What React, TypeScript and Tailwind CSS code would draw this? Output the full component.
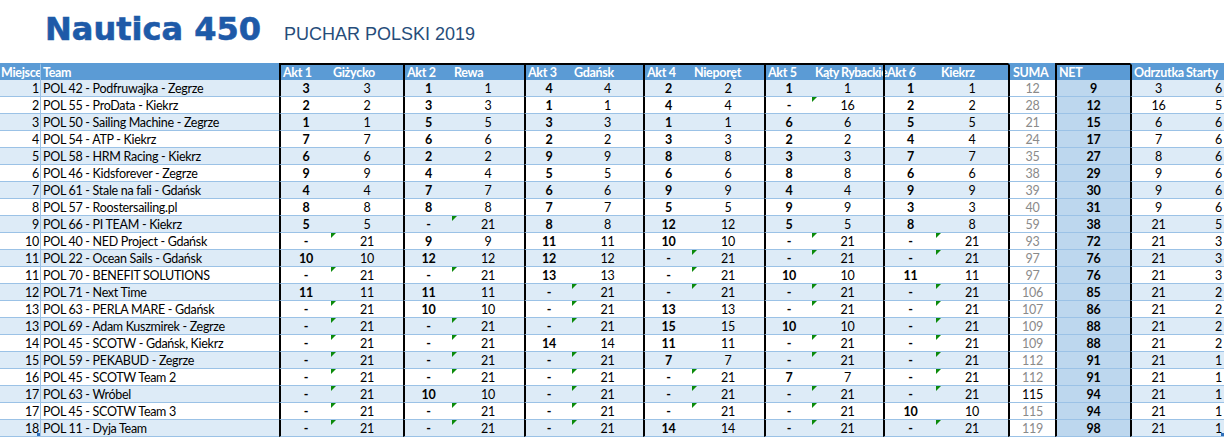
import React from "react";

// column widths follow the sheet: Miejsce, Team, 6 x (Akt, place), SUMA, NET, Odrzutka, Starty
const COLS =
  "grid grid-cols-[41px_238px_52px_72px_49px_72px_48px_71px_49px_72px_48px_71px_53px_72px_47px_75px_55px_39px]";

const HEADERS = [
  "Miejsce",
  "Team",
  "Akt 1",
  "Giżycko",
  "Akt 2",
  "Rewa",
  "Akt 3",
  "Gdańsk",
  "Akt 4",
  "Nieporęt",
  "Akt 5",
  "Kąty Rybackie",
  "Akt 6",
  "Kiekrz",
  "SUMA",
  "NET",
  "Odrzutka",
  "Starty",
];

type Row = [number, string, string, number, number, number, number, boolean?];

const ROWS: Row[] = [
  [1, "POL 42 - Podfruwajka - Zegrze", "3 3 1 1 4 4 2 2 1 1 1 1", 12, 9, 3, 6],
  [2, "POL 55 - ProData - Kiekrz", "2 2 3 3 1 1 4 4 - 16 2 2", 28, 12, 16, 5],
  [3, "POL 50 - Sailing Machine - Zegrze", "1 1 5 5 3 3 1 1 6 6 5 5", 21, 15, 6, 6],
  [4, "POL 54 - ATP - Kiekrz", "7 7 6 6 2 2 3 3 2 2 4 4", 24, 17, 7, 6],
  [5, "POL 58 - HRM Racing - Kiekrz", "6 6 2 2 9 9 8 8 3 3 7 7", 35, 27, 8, 6],
  [6, "POL 46 - Kidsforever - Zegrze", "9 9 4 4 5 5 6 6 8 8 6 6", 38, 29, 9, 6],
  [7, "POL 61 - Stale na fali - Gdańsk", "4 4 7 7 6 6 9 9 4 4 9 9", 39, 30, 9, 6],
  [8, "POL 57 - Roostersailing.pl", "8 8 8 8 7 7 5 5 9 9 3 3", 40, 31, 9, 6],
  [9, "POL 66 - PI TEAM - Kiekrz", "5 5 - 21 8 8 12 12 5 5 8 8", 59, 38, 21, 5],
  [10, "POL 40 - NED Project - Gdańsk", "- 21 9 9 11 11 10 10 - 21 - 21", 93, 72, 21, 3],
  [11, "POL 22 - Ocean Sails - Gdańsk", "10 10 12 12 12 12 - 21 - 21 - 21", 97, 76, 21, 3],
  [11, "POL 70 - BENEFIT SOLUTIONS", "- 21 - 21 13 13 - 21 10 10 11 11", 97, 76, 21, 3],
  [12, "POL 71 - Next Time", "11 11 11 11 - 21 - 21 - 21 - 21", 106, 85, 21, 2],
  [13, "POL 63 - PERLA MARE - Gdańsk", "- 21 10 10 - 21 13 13 - 21 - 21", 107, 86, 21, 2],
  [13, "POL 69 - Adam Kuszmirek - Zegrze", "- 21 - 21 - 21 15 15 10 10 - 21", 109, 88, 21, 2],
  [14, "POL 45 - SCOTW  - Gdańsk, Kiekrz", "- 21 - 21 14 14 11 11 - 21 - 21", 109, 88, 21, 2],
  [15, "POL 59 - PEKABUD - Zegrze", "- 21 - 21 - 21 7 7 - 21 - 21", 112, 91, 21, 1],
  [16, "POL 45 - SCOTW Team 2", "- 21 - 21 - 21 - 21 7 7 - 21", 112, 91, 21, 1],
  [17, "POL 63 - Wróbel", "- 21 10 10 - 21 - 21 - 21 - 21", 115, 94, 21, 1, true],
  [17, "POL 45 - SCOTW Team 3", "- 21 - 21 - 21 - 21 - 21 10 10", 115, 94, 21, 1],
  [18, "POL 11 - Dyja Team", "- 21 - 21 - 21 14 14 - 21 - 21", 119, 98, 21, 1],
];

function headerCell(i: number) {
  if (i === 0) return "overflow-hidden border-t-2 border-t-transparent border-r border-r-[#9dc3e6] pl-[1px]";
  if (i === 1) return "overflow-hidden border-t-2 border-t-transparent pl-[2px]";
  if (i >= 2 && i <= 13 && i % 2 === 0)
    return "overflow-hidden border-t-2 border-t-black border-l-2 border-l-black pl-[2px]";
  // "Kąty Rybackie" runs up to the next border, as in the sheet
  if (i === 11) return "overflow-visible border-t-2 border-t-black pl-[3px] tracking-[-0.55px]";
  if (i === 13) return "overflow-hidden border-t-2 border-t-black pl-[5px]";
  if (i >= 3 && i <= 13) return "overflow-hidden border-t-2 border-t-black pl-[2px]";
  if (i === 14) return "overflow-hidden border-t-2 border-t-transparent border-l-2 border-l-black pl-[3px]";
  if (i === 15) return "overflow-hidden border-t-2 border-t-black border-l-2 border-l-black pl-[2px]";
  if (i === 16) return "overflow-hidden border-t-2 border-t-transparent border-l-2 border-l-black pl-[2px]";
  return "overflow-hidden border-t-2 border-t-transparent pl-[1px]";
}

function Triangle() {
  return (
    <span className="absolute left-0 top-0 h-0 w-0 border-t-[5px] border-r-[5px] border-t-[#0b8a0b] border-r-transparent" />
  );
}

function DataRow({ row, idx, last }: { row: Row; idx: number; last: boolean }) {
  const [place, team, res, suma, net, odr, starty, dark] = row;
  const vals = res.split(" ");
  const stripe = idx % 2 === 0 ? "bg-[#ddebf7]" : "bg-white";
  const cell = "relative flex h-[17px] items-center overflow-hidden whitespace-nowrap border-b border-b-[#9bc2e6] pt-[2px]";

  return (
    <div className={COLS}>
      <div className={`${cell} ${stripe} justify-end border-r border-r-[#9bc2e6] pr-[1px]`}>
        {place}
        {last && <span className="absolute bottom-0 right-0 h-[3px] w-[3px] bg-[#2f6fba]" />}
      </div>
      <div className={`${cell} ${stripe} pl-[2px]`}>{team}</div>
      {vals.map((v, i) =>
        i % 2 === 0 ? (
          <div key={i} className={`${cell} ${stripe} justify-center border-l-2 border-l-black font-bold`}>
            {v}
          </div>
        ) : (
          <div key={i} className={`${cell} ${stripe} justify-center`}>
            {vals[i - 1] === "-" && <Triangle />}
            {v}
          </div>
        )
      )}
      <div
        className={`${cell} justify-center border-l-2 border-l-black bg-white ${
          dark ? "text-black" : "text-[#8a8a8a]"
        }`}
      >
        {suma}
      </div>
      <div className={`${cell} justify-center border-l-2 border-l-black bg-[#bdd7ee] font-bold`}>{net}</div>
      <div className={`${cell} ${stripe} justify-center border-l-2 border-l-black`}>{odr}</div>
      <div className={`${cell} ${stripe} justify-end pr-[2px]`}>
        {starty}
        {last && <span className="absolute bottom-0 right-0 h-[3px] w-[3px] bg-[#2f6fba]" />}
      </div>
    </div>
  );
}

export default function App() {
  return (
    <div className="h-[439px] w-[1224px] overflow-hidden bg-white">
      {/* title */}
      <div className="flex h-[63px] items-baseline pl-[45px] pt-[13px]">
        <span className="font-['DejaVu_Sans',sans-serif] text-[32px] font-bold leading-none text-[#1e5aa8] [-webkit-text-stroke:0.6px_#1e5aa8]">
          Nautica 450
        </span>
        <span className="ml-[23px] font-['Liberation_Sans',Arial,sans-serif] text-[18px] leading-none text-[#264d7a]">
          PUCHAR POLSKI 2019
        </span>
      </div>

      {/* sheet */}
      <div className="font-['Lato',sans-serif] text-[12.5px] tracking-[-0.3px] text-black">
        <div className={`${COLS} bg-[#5b9bd5] font-bold text-white`}>
          {HEADERS.map((h, i) => (
            <div key={h} className={`flex h-[17px] items-center whitespace-nowrap pt-[1px] ${headerCell(i)}`}>
              {h}
            </div>
          ))}
        </div>
        {ROWS.map((r, i) => (
          <DataRow key={i} row={r} idx={i} last={i === ROWS.length - 1} />
        ))}
      </div>
    </div>
  );
}
